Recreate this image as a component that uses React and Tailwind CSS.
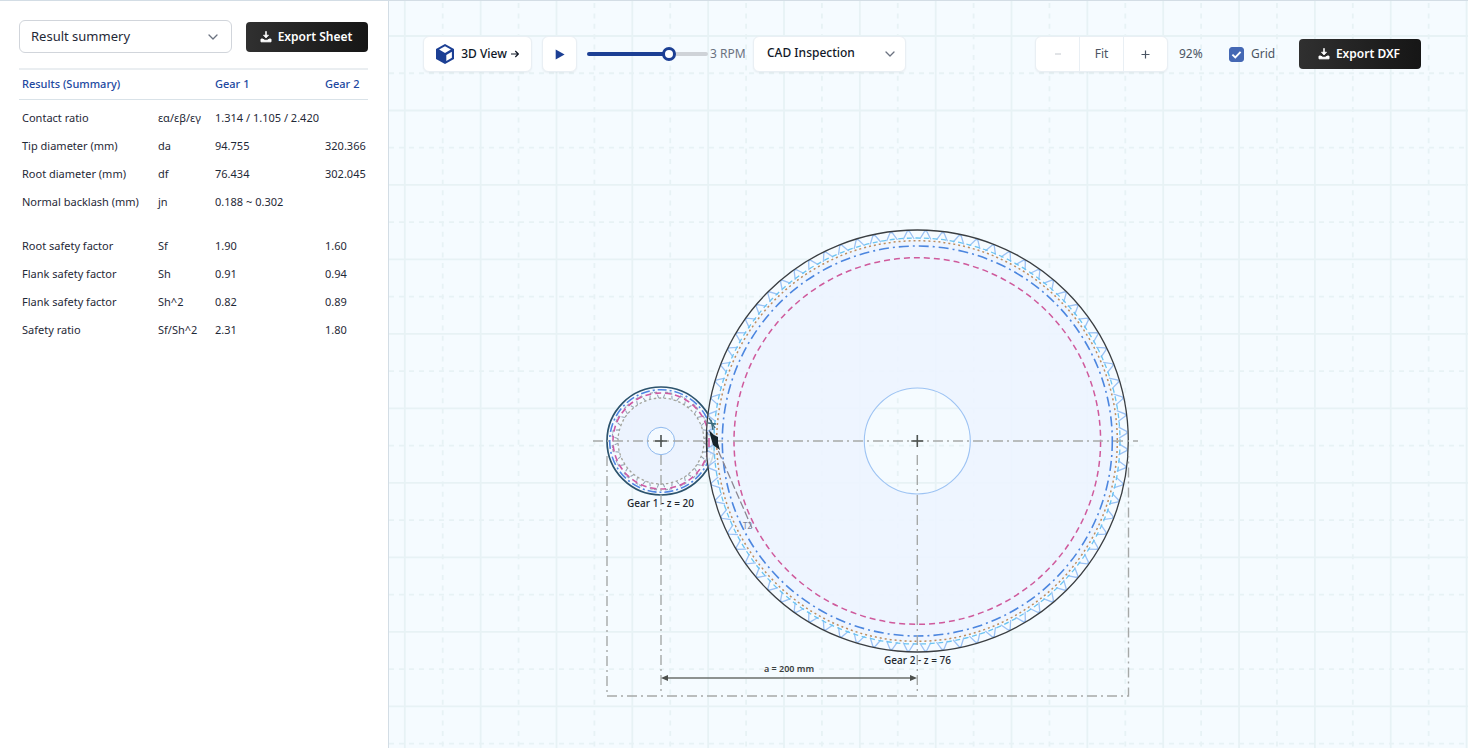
import React, { useState } from "react";

const NAVY = "#1c3f94";

function DownloadIcon() {
  return (
    <svg className="h-3 w-3 shrink-0" viewBox="0 0 12 12" fill="none" stroke="currentColor" aria-hidden="true">
      <path d="M6 0.8V5" strokeWidth="1.6" strokeLinecap="round" />
      <path d="M3.4 4.2H8.6L6 7Z" fill="currentColor" strokeWidth="0.7" strokeLinejoin="round" />
      <path d="M1 8.1H2.9Q3.8 9.4 6 9.4T9.1 8.1H11V10.8H1Z" fill="currentColor" strokeWidth="1" strokeLinejoin="round" />
    </svg>
  );
}

function CubeIcon() {
  return (
    <svg className="h-5 w-[18px] shrink-0" viewBox="0 0 18 20" aria-hidden="true">
      <path d="M9 0L18 5V15L9 20L0 15V5Z" fill={NAVY} />
      <path d="M9 2.3L14.9 5.6L9 8.9L3.1 5.6Z" fill="#fff" />
      <path d="M15.9 7.8V13.8L10.3 17V11Z" fill="#fff" />
    </svg>
  );
}

function Chevron({ className }) {
  return (
    <svg
      className={"pointer-events-none absolute top-1/2 h-[6px] w-[10px] -translate-y-1/2 " + className}
      viewBox="0 0 10 6"
      fill="none"
      stroke="#6b7280"
      strokeWidth="1.3"
      strokeLinecap="round"
      strokeLinejoin="round"
      aria-hidden="true"
    >
      <path d="M1 1L5 5L9 1" />
    </svg>
  );
}

function ExportButton({ children }) {
  return (
    <button
      type="button"
      className="flex h-[30px] w-[122px] shrink-0 items-center justify-center gap-[6px] rounded bg-linear-to-r from-[#303030] to-[#161616] pr-[2px] text-xs font-semibold whitespace-nowrap text-white"
    >
      <DownloadIcon />
      {children}
    </button>
  );
}

const ratioRows = [
  ["Contact ratio", "εα/εβ/εγ", "1.314 / 1.105 / 2.420"],
  ["Tip diameter (mm)", "da", "94.755", "320.366"],
  ["Root diameter (mm)", "df", "76.434", "302.045"],
  ["Normal backlash (mm)", "jn", "0.188 ~ 0.302"],
];

const safetyRows = [
  ["Root safety factor", "Sf", "1.90", "1.60"],
  ["Flank safety factor", "Sh", "0.91", "0.94"],
  ["Flank safety factor", "Sh^2", "0.82", "0.89"],
  ["Safety ratio", "Sf/Sh^2", "2.31", "1.80"],
];

function Row({ cells }) {
  const [label, symbol, first, second] = cells;
  return (
    <tr className="h-7">
      <th scope="row" className="pl-[3px] text-left font-normal">{label}</th>
      <td className="pl-[3px]">{symbol}</td>
      <td className="pl-[3px]" colSpan={second ? 1 : 2}>{first}</td>
      {second && <td className="pl-[3px]">{second}</td>}
    </tr>
  );
}

function Sidebar() {
  return (
    <aside className="w-[389px] shrink-0 border-r border-[#d3dde5] bg-white pt-[19px] pr-5 pl-[19px]">
      <div className="flex items-center justify-between">
        <div className="relative w-[213px]">
          <select
            aria-label="Result view"
            className="h-[33px] w-full appearance-none rounded-md border border-[#d1d5db] bg-white pl-[11px] text-[13px] text-[#1f2937]"
          >
            <option>Result summery</option>
          </select>
          <Chevron className="right-[14px]" />
        </div>
        <ExportButton>Export Sheet</ExportButton>
      </div>
      <table className="mt-[15px] w-full table-fixed border-collapse text-[11px] whitespace-nowrap text-[#1f2937]">
        <colgroup>
          <col className="w-[136px]" />
          <col className="w-[57px]" />
          <col className="w-[110px]" />
          <col />
        </colgroup>
        <thead>
          <tr className="h-[30px] border-t-2 border-b border-t-[#eaeef1] border-b-[#d9e2e8] text-left text-[#2148a0]">
            <th scope="col" colSpan={2} className="pl-[3px] font-medium">Results (Summary)</th>
            <th scope="col" className="pl-[3px] font-medium">Gear 1</th>
            <th scope="col" className="pl-[3px] font-medium">Gear 2</th>
          </tr>
        </thead>
        <tbody className="before:block before:h-[5px]">
          {ratioRows.map((r) => <Row key={r[1]} cells={r} />)}
        </tbody>
        <tbody className="before:block before:h-4">
          {safetyRows.map((r) => <Row key={r[1]} cells={r} />)}
        </tbody>
      </table>
    </aside>
  );
}

function Toolbar({ grid, setGrid }) {
  const [rpm, setRpm] = useState(3.1);
  const card = "h-9 rounded-md border border-[#e9eff4] bg-white shadow-xs";
  return (
    <div className="relative flex items-center justify-between pt-[35px] pr-[47px] pl-[34px] text-xs text-[#4b5563]">
      <div className="flex items-center">
        <button type="button" className={card + " flex w-[109px] items-center justify-center gap-[7px] font-medium whitespace-nowrap text-[#111827]"}>
          <CubeIcon />
          <span className="flex items-center gap-1">
            3D View
            <svg className="h-2 w-2" viewBox="0 0 8 8" fill="none" stroke="currentColor" strokeWidth="1.2" aria-hidden="true">
              <path d="M0 4H7.2M4.3 1L7.3 4L4.3 7" />
            </svg>
          </span>
        </button>
        <button type="button" aria-label="Play" className={card + " ml-[10px] flex w-[35px] items-center justify-center"}>
          <svg className="h-[11px] w-[10px]" viewBox="0 0 10 11" aria-hidden="true">
            <path d="M0.7 0.5L9.6 5.5L0.7 10.5Z" fill={NAVY} />
          </svg>
        </button>
        <input
          type="range"
          aria-label="Speed"
          min="1"
          max="4"
          step="0.1"
          value={rpm}
          onChange={(e) => setRpm(Number(e.target.value))}
          className="ml-[10px] h-1 w-[121px] appearance-none rounded-full bg-linear-to-r from-[#1c3f94] from-67% to-[#cfd3d8] to-67% [&::-webkit-slider-thumb]:h-[14px] [&::-webkit-slider-thumb]:w-[14px] [&::-webkit-slider-thumb]:appearance-none [&::-webkit-slider-thumb]:rounded-full [&::-webkit-slider-thumb]:border-3 [&::-webkit-slider-thumb]:border-[#1c3f94] [&::-webkit-slider-thumb]:bg-white"
        />
        <output className="ml-[2px] w-[43px] whitespace-nowrap text-[#6b7280]">{Math.round(rpm)} RPM</output>
        <div className="relative w-[153px]">
          <select aria-label="View mode" className={card + " block w-full appearance-none pl-[13px] pb-[2px] font-medium text-[#111827]"}>
            <option>CAD Inspection</option>
          </select>
          <Chevron className="right-[11px]" />
        </div>
      </div>
      <div className="flex items-center">
        <div className={card + " flex w-[133px] divide-x divide-[#e9eff4]"}>
          <button type="button" disabled aria-label="Zoom out" className="flex flex-1 items-center justify-center text-[#c3c8ce]">
            <svg className="h-2 w-[6px]" viewBox="0 0 6 8" stroke="currentColor" aria-hidden="true"><path d="M0 4H6" /></svg>
          </button>
          <button type="button" className="flex-1">Fit</button>
          <button type="button" aria-label="Zoom in" className="flex flex-1 items-center justify-center">
            <svg className="h-[9px] w-[9px]" viewBox="0 0 9 9" stroke="currentColor" strokeWidth="1.2" aria-hidden="true"><path d="M0.5 4.5H8.5M4.5 0.5V8.5" /></svg>
          </button>
        </div>
        <span className="ml-[11px] w-[50px]">92%</span>
        <label className="flex w-[70px] items-center gap-[7px]">
          <span className="relative flex">
            <input
              type="checkbox"
              checked={grid}
              onChange={(e) => setGrid(e.target.checked)}
              className="h-[15px] w-[15px] appearance-none rounded-[3px] border border-[#4468b4] checked:bg-[#4468b4]"
            />
            {grid && (
              <svg className="pointer-events-none absolute inset-0 h-[15px] w-[15px]" viewBox="0 0 15 15" fill="none" stroke="#fff" strokeWidth="1.9" aria-hidden="true">
                <path d="M3.4 7.6L6.3 10.4L11.6 4.8" />
              </svg>
            )}
          </span>
          Grid
        </label>
        <ExportButton>Export DXF</ExportButton>
      </div>
    </div>
  );
}

function GridLines() {
  const cols = Array.from({ length: 29 }, (_, i) => 404.8 + i * 37.92);
  const rows = Array.from({ length: 20 }, (_, i) => 36 + i * 37.24);
  return (
    <g stroke="#e7f2f5" strokeWidth="1.8" fill="none">
      {cols.map((x, i) => (
        <path key={x} d={`M${x} 0V748`} strokeDasharray={i % 2 ? "5 5.4" : undefined} strokeDashoffset={i % 2 ? -3 : 0} />
      ))}
      {rows.map((y, i) => (
        <path key={y} d={`M389 ${y}H1468`} strokeDasharray={i % 2 ? "5 5" : undefined} />
      ))}
    </g>
  );
}

function teeth(cx, cy, count, rOuter, rInner, topHalf, footHalf, start) {
  const pt = (r, a) => `${(cx + r * Math.cos(a)).toFixed(2)} ${(cy + r * Math.sin(a)).toFixed(2)}`;
  let d = "";
  for (let i = 0; i < count; i++) {
    const a = start + (i * 2 * Math.PI) / count;
    d += `M${pt(rInner, a - footHalf / rInner)}L${pt(rOuter, a - topHalf / rOuter)}L${pt(rOuter, a + topHalf / rOuter)}L${pt(rInner, a + footHalf / rInner)}`;
  }
  return d;
}

const bigTeeth = teeth(917, 441, 76, 210, 202, 1, 5.5, -Math.PI / 2 + Math.PI / 76);
const smallTeeth = teeth(661, 441, 20, 49, 43, 3, 4.5, -Math.PI / 2 + Math.PI / 20);

function GearDrawing({ grid }) {
  return (
    <svg
      className="absolute inset-0 h-full w-full"
      viewBox="389 1 1079 747"
      preserveAspectRatio="xMidYMid slice"
      role="img"
      aria-label="Gear pair layout"
      fill="none"
    >
      {grid && <GridLines />}

      <g>
        <circle cx="661" cy="441" r="54" fill="#f4faff" fillOpacity="0.9" />
        <path fillRule="evenodd" fill="#eaf1fe" fillOpacity="0.85" d="M618 441a43 43 0 1 0 86 0a43 43 0 1 0 -86 0M647.3 441a13.7 13.7 0 1 0 27.4 0a13.7 13.7 0 1 0 -27.4 0" />
        <path d={smallTeeth} stroke="#98a5b8" strokeWidth="1.1" strokeDasharray="4 1" />
        <circle cx="661" cy="441" r="43" stroke="#a3a39b" strokeWidth="1.3" strokeDasharray="2.5 2.5" />
        <circle cx="661" cy="441" r="48" stroke="#cf5aa3" strokeWidth="1.6" strokeDasharray="6 4" />
        <circle cx="661" cy="441" r="51.3" stroke="#4f86e3" strokeWidth="1.6" strokeDasharray="9 3 2 3" />
        <circle cx="661" cy="441" r="54" stroke="#2c536d" strokeWidth="1.7" />
        <circle cx="661" cy="441" r="13.7" stroke="#8fb9ee" />
      </g>

      <g>
        <path fillRule="evenodd" fill="#f6fbff" fillOpacity="0.8" d="M706 441a211 211 0 1 0 422 0a211 211 0 1 0 -422 0M716 441a201 201 0 1 0 402 0a201 201 0 1 0 -402 0" />
        <path fillRule="evenodd" fill="#edf4ff" fillOpacity="0.88" d="M716 441a201 201 0 1 0 402 0a201 201 0 1 0 -402 0M864 441a53 53 0 1 0 106 0a53 53 0 1 0 -106 0" />
        <path d={bigTeeth} stroke="#9cc2f5" strokeWidth="1.3" />
        <circle cx="917" cy="441" r="203" stroke="#6ac4f2" strokeWidth="1.3" strokeDasharray="5 3.6" />
        <circle cx="917" cy="441" r="200.3" stroke="#bd8d5e" strokeWidth="1.5" strokeDasharray="2 3" />
        <circle cx="917.3" cy="441" r="195" stroke="#4c86df" strokeWidth="1.6" strokeDasharray="10 4 2 4" />
        <circle cx="917.3" cy="441" r="183.3" stroke="#cf5a9c" strokeWidth="1.5" strokeDasharray="6 4" />
        <circle cx="917.3" cy="441" r="211" stroke="#3a3e42" strokeWidth="1.3" />
        <circle cx="917.3" cy="441" r="53" stroke="#9dc3f3" strokeWidth="1.1" />
      </g>

      <g stroke="#a6a9a8" strokeWidth="1.4" strokeDasharray="10 4 2 4">
        <path d="M593 441H1138" />
        <path d="M661 455V692" />
        <path d="M917.3 455V692" />
        <path d="M607 456V696H1128.5V456" />
      </g>

      <path d="M714 441L752 528" stroke="#8b8792" strokeWidth="1.3" strokeDasharray="8 3" />
      <path d="M709 418L715 428M708 423L716 424M711 420L713 430" stroke="#3a6b7e" strokeWidth="1.4" />
      <path d="M709 430L714 435L718 437L718 443L720 450L713 445L711 438Z" fill="#16242b" />
      <path d="M707 452V432" stroke="#20242a" strokeWidth="1" />
      <path d="M709 438V447" stroke="#cf5aa3" strokeWidth="1.6" />
      <text x="743" y="529" fontSize="8" fill="#7a7f96">T2</text>

      <g stroke="#4d5350" strokeWidth="1.6">
        <path d="M655 441H667M661 435V447" />
        <path d="M911.3 441H923.3M917.3 435V447" />
      </g>

      <path d="M664 678H914" stroke="#6b6f6b" strokeWidth="1.5" />
      <path d="M661 678L668 675V681ZM917 678L910 675V681Z" fill="#4d504d" />
      <g textAnchor="middle" fontSize="10" fill="#22272e" className="font-medium">
        <text x="660.5" y="507">Gear 1 - z = 20</text>
        <text x="917.5" y="664">Gear 2 - z = 76</text>
        <text x="789" y="672" fontSize="9" fill="#3b403e" className="font-semibold">a = 200 mm</text>
      </g>
    </svg>
  );
}

export default function App() {
  const [grid, setGrid] = useState(true);
  return (
    <div className="flex min-h-screen border-t border-[#d3dde5] font-['Noto_Sans','Open_Sans',sans-serif]">
      <Sidebar />
      <main className="relative min-w-0 flex-1 overflow-hidden bg-[#f5fbff]">
        <GearDrawing grid={grid} />
        <Toolbar grid={grid} setGrid={setGrid} />
      </main>
    </div>
  );
}
